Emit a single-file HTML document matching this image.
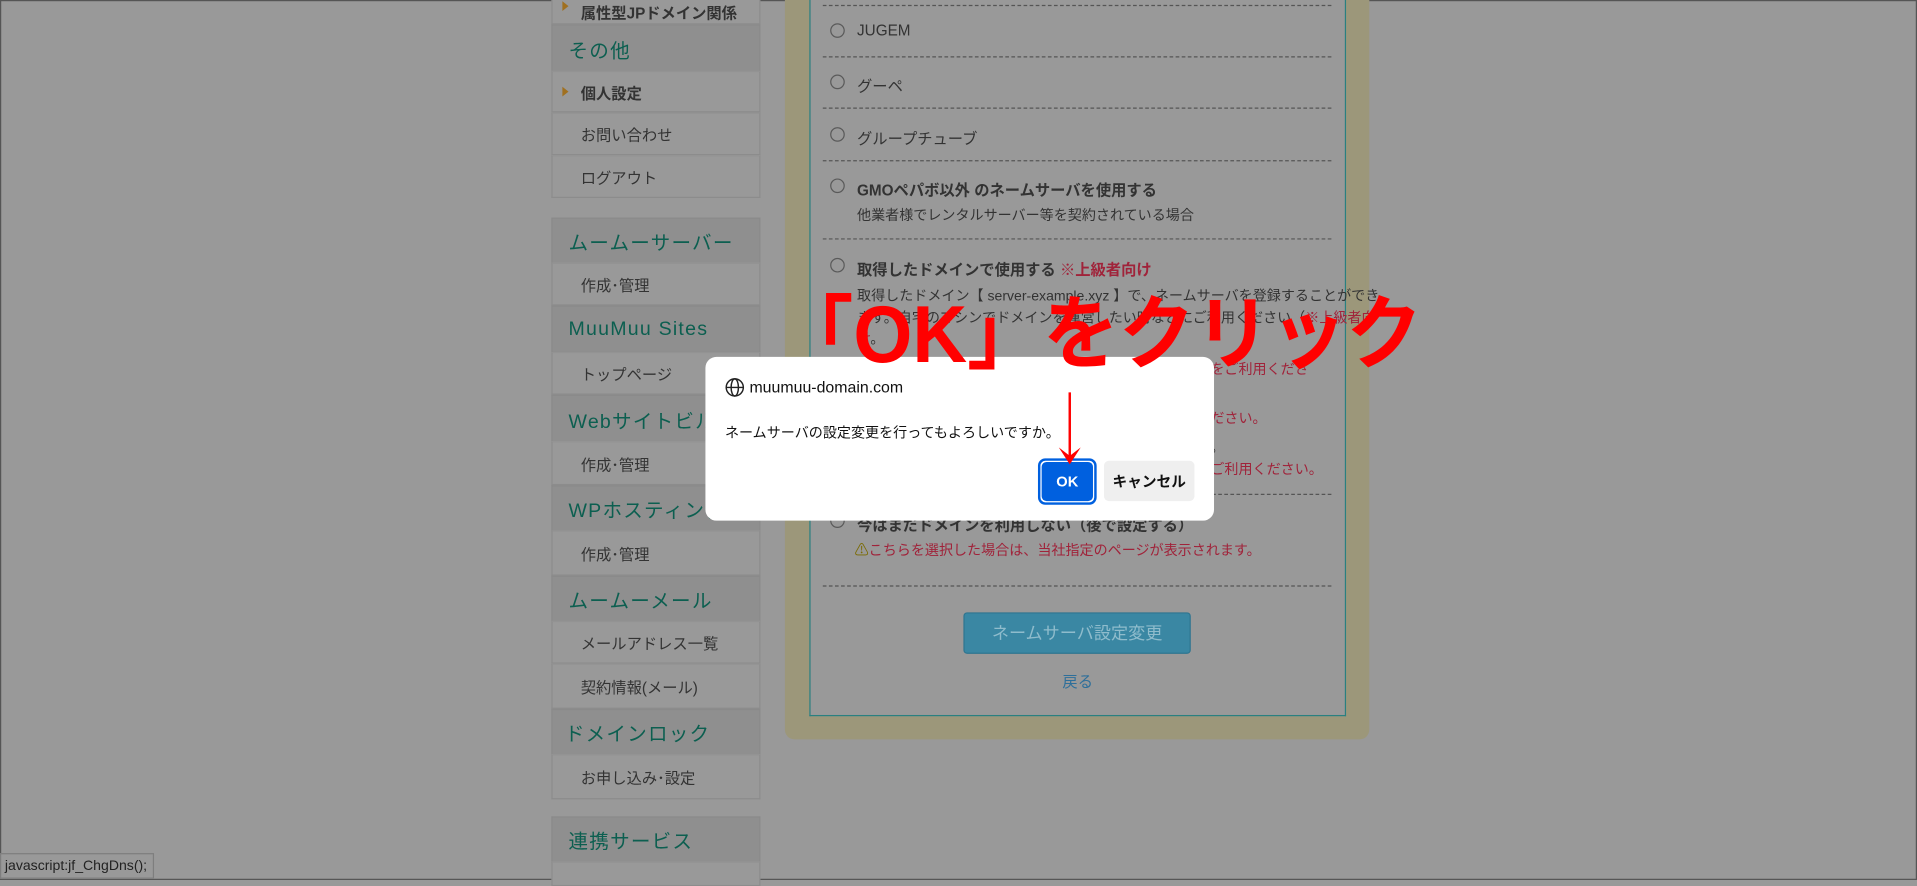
<!DOCTYPE html>
<html><head><meta charset="utf-8">
<style>
html,body{margin:0;padding:0;width:1917px;height:880px;overflow:hidden;background:#999;}
#w{position:absolute;left:0;top:0;width:1568px;height:720px;transform:scale(1.22258,1.2222);transform-origin:0 0;background:#999;font-family:"Liberation Sans","Noto Sans CJK JP",sans-serif;color:#333;}
.a{position:absolute;white-space:nowrap;}
.frame{position:absolute;left:0;top:0;width:1566px;height:718px;border:1px solid #555;}
.h{position:absolute;left:451px;width:171px;background:#8f8f8f;border:1px solid #8a8a8a;border-bottom:none;color:#0c5f50;font-size:16px;letter-spacing:1px;box-sizing:border-box;padding-left:13px;display:flex;align-items:center;}
.i{position:absolute;left:451px;width:171px;background:#999;border:1px solid #8c8c8c;border-top:1px solid #939393;font-size:12.5px;color:#333;box-sizing:border-box;padding-left:23px;display:flex;align-items:center;}
.tri{position:absolute;left:8px;width:0;height:0;border-top:4px solid transparent;border-bottom:4px solid transparent;border-left:5px solid #a07020;}
.dash{position:absolute;left:673px;width:416px;border-top:1px dashed #555;}
.rad{position:absolute;left:679px;width:10px;height:10px;border:1.5px solid #5a5a5a;border-radius:50%;}
.t{position:absolute;font-size:12.5px;color:#333;white-space:nowrap;}
.red{color:#a0233a;}
</style></head><body><div id="w">
<div class="frame"></div>
<div class="i" style="top:-2px;height:22px;font-weight:bold;"><span class="tri" style="top:2px"></span>属性型JPドメイン関係</div>
<div class="h" style="top:20px;height:38px;">その他</div>
<div class="i" style="top:58px;height:34px;font-weight:bold;"><span class="tri" style="top:12px"></span>個人設定</div>
<div class="i" style="top:92px;height:35px;">お問い合わせ</div>
<div class="i" style="top:127px;height:35px;">ログアウト</div>
<div class="h" style="top:178px;height:37px;">ムームーサーバー</div>
<div class="i" style="top:215px;height:35px;">作成･管理</div>
<div class="h" style="top:250px;height:38px;">MuuMuu Sites</div>
<div class="i" style="top:288px;height:35px;">トップページ</div>
<div class="h" style="top:323px;height:38px;">Webサイトビルダー</div>
<div class="i" style="top:361px;height:36px;">作成･管理</div>
<div class="h" style="top:397px;height:37px;">WPホスティング</div>
<div class="i" style="top:434px;height:37px;">作成･管理</div>
<div class="h" style="top:471px;height:37px;">ムームーメール</div>
<div class="i" style="top:508px;height:35px;">メールアドレス一覧</div>
<div class="i" style="top:543px;height:37px;">契約情報(メール)</div>
<div class="h" style="top:580px;height:37px;padding-left:10px;">ドメインロック</div>
<div class="i" style="top:617px;height:37px;">お申し込み･設定</div>
<div class="h" style="top:668px;height:37px;">連携サービス</div>
<div class="i" style="top:705px;height:20px;"></div>
<div class="a" style="left:642px;top:-10px;width:478px;height:615px;background:#9c977a;border-radius:0 0 8px 8px;"></div>
<div class="a" style="left:662px;top:-2px;width:437px;height:587px;background:#999;border:1px solid #2a8080;border-top:none;"></div>
<div class="dash" style="top:4px"></div>
<div class="rad" style="top:19px"></div><div class="t" style="left:701px;top:18px">JUGEM</div>
<div class="dash" style="top:46px"></div>
<div class="rad" style="top:61px"></div><div class="t" style="left:701px;top:60px">グーペ</div>
<div class="dash" style="top:88px"></div>
<div class="rad" style="top:104px"></div><div class="t" style="left:701px;top:103px">グループチューブ</div>
<div class="dash" style="top:131px"></div>
<div class="rad" style="top:146px"></div><div class="t" style="left:701px;top:145px;font-weight:bold">GMOペパボ以外 のネームサーバを使用する</div>
<div class="t" style="left:701px;top:168px;font-size:11.5px">他業者様でレンタルサーバー等を契約されている場合</div>
<div class="dash" style="top:195px"></div>
<div class="rad" style="top:211px"></div><div class="t" style="left:701px;top:210px;font-weight:bold">取得したドメインで使用する <span style="color:#a0233a">※上級者向け</span></div>
<div class="t" style="left:701px;top:234px;font-size:11.5px">取得したドメイン【 server-example.xyz 】で、ネームサーバを登録することができ</div>
<div class="t" style="left:701px;top:252px;font-size:11.5px">ます。自宅のマシンでドメインを運営したい時などにご利用ください（<span class="red">※上級者向</span></div>
<div class="t" style="left:701px;top:269px;font-size:11.5px"><span class="red">け</span>。</div>
<div class="t red" style="left:990px;top:294px;font-size:11.5px">をご利用くださ</div>
<div class="t red" style="left:990px;top:334px;font-size:11.5px">ださい。</div>
<div class="t" style="left:990px;top:358px;font-size:11.5px">。</div>
<div class="t red" style="left:990px;top:376px;font-size:11.5px">ご利用ください。</div>
<div class="dash" style="top:404px"></div>
<div class="rad" style="top:420px"></div><div class="t" style="left:701px;top:419px;font-weight:bold">今はまだドメインを利用しない（後で設定する）</div>
<div class="t red" style="left:699px;top:442px;font-size:11.5px"><span style="color:#7a6a00">⚠</span>こちらを選択した場合は、当社指定のページが表示されます。</div>
<div class="dash" style="top:479px"></div>
<div class="a" style="left:788px;top:501px;width:186px;height:34px;background:#3a87a3;border:1px solid #2e7590;border-radius:3px;box-sizing:border-box;color:#8fbccc;font-size:14px;display:flex;align-items:center;justify-content:center;">ネームサーバ設定変更</div>
<div class="t" style="left:869px;top:547px;color:#2e6f9a">戻る</div>
<div class="a" style="left:0;top:698px;width:126px;height:21px;border:1px solid #7e7e7e;background:#999;font-size:11.5px;color:#222;line-height:21px;padding-left:3px;box-sizing:border-box;">javascript:jf_ChgDns();</div>
<div class="a" style="left:577px;top:292px;width:416px;height:134px;background:#fff;border-radius:9px;"></div>
<svg class="a" style="left:593px;top:309px" width="16" height="16" viewBox="0 0 16 16"><g fill="none" stroke="#222" stroke-width="1.2"><circle cx="8" cy="8" r="7"/><ellipse cx="8" cy="8" rx="3" ry="7"/><line x1="1" y1="8" x2="15" y2="8"/></g></svg>
<div class="t" style="left:613px;top:309px;font-size:13px;color:#111">muumuu-domain.com</div>
<div class="t" style="left:593px;top:346px;font-size:11.5px;color:#111">ネームサーバの設定変更を行ってもよろしいですか。</div>
<div class="a" style="left:849px;top:375px;width:48px;height:38px;border:2px solid #0060df;border-radius:6px;box-sizing:border-box;"></div>
<div class="a" style="left:852px;top:378px;width:42px;height:32px;background:#0060df;border-radius:4px;color:#fff;font-size:12px;font-weight:bold;display:flex;align-items:center;justify-content:center;">OK</div>
<div class="a" style="left:903px;top:377px;width:74px;height:33px;background:#efefef;border-radius:4px;color:#111;font-size:12px;font-weight:bold;display:flex;align-items:center;justify-content:center;">キャンセル</div>
<div class="a" style="left:636px;top:238px;font-size:66px;font-weight:bold;color:#ff0000;line-height:70px;transform:scaleX(0.94);transform-origin:0 0;">「OK」をクリック</div>
<svg class="a" style="left:860px;top:318px" width="30" height="64"><line x1="15" y1="3" x2="15" y2="58" stroke="#ff0000" stroke-width="2"/><path d="M6 48 L15 62 L24 48 L15 55 Z" fill="#ff0000"/></svg>
</div></body></html>
